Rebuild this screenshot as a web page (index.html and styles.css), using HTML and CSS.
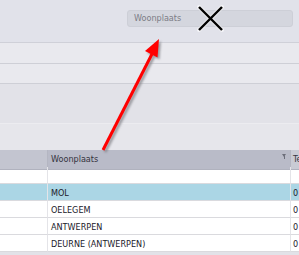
FILE: index.html
```html
<!DOCTYPE html>
<html lang="nl">
<head>
<meta charset="UTF-8">
<title>Woonplaats</title>
<link rel="stylesheet" href="styles.css">
</head>
<body>
<div id="screen">
    <div class="toolbar">
        <div class="search">Woonplaats</div>
    </div>
    <div class="band"></div>
    <div class="band band-low"></div>
    <div class="panel"></div>
    <div class="group-bar"></div>

    <!-- Raster -->
    <div class="grid">
        <div class="head cell"></div>
        <div class="head cell head-active">Woonplaats <span class="filter"></span></div>
        <div class="head cell head-last">Te</div>

        <div class="cell"></div><div class="cell"></div><div class="cell last"></div>

        <div class="cell sel"></div><div class="cell sel">MOL</div><div class="cell sel last">0</div>
        <div class="cell"></div><div class="cell">OELEGEM</div><div class="cell last">0</div>
        <div class="cell"></div><div class="cell">ANTWERPEN</div><div class="cell last">0</div>
        <div class="cell"></div><div class="cell">DEURNE (ANTWERPEN)</div><div class="cell last">0</div>
    </div>

    <!-- annotaties -->
    <svg class="overlay" width="299" height="255" viewBox="0 0 299 255">
        <defs>
            <filter id="shadow" x="-20%" y="-20%" width="140%" height="140%">
                <feGaussianBlur stdDeviation="1.2"/>
            </filter>
        </defs>
        <g fill="#7a7a80" stroke="#7a7a80" opacity="0.7" filter="url(#shadow)" transform="translate(2 2)">
            <line x1="103" y1="150" x2="152" y2="54" stroke-width="3"/>
            <polygon points="159,39 157.5,57.5 145,51" stroke="none"/>
        </g>
        <line x1="103" y1="150" x2="152" y2="54" stroke="#f00" stroke-width="3"/>
        <polygon points="159,39 157.5,57.5 145,51" fill="#f00"/>

        <g stroke="#fff" stroke-width="4" opacity="0.6" stroke-linecap="round">
            <line x1="199" y1="7" x2="222" y2="30"/>
            <line x1="222" y1="7" x2="199" y2="30"/>
        </g>
        <g stroke="#000" stroke-width="2.4">
            <line x1="199" y1="7" x2="222" y2="30"/>
            <line x1="222" y1="7" x2="199" y2="30"/>
        </g>
    </svg>
</div>
</body>
</html>
```
FILE: styles.css
```css
body {
    margin: 0;
    font-family: "DejaVu Sans Condensed", "DejaVu Sans", sans-serif;
    font-size: 9px;
    color: #20202a;
    background-color: #e2e2e8;
}

#screen {
    position: relative;
    width: 299px;
    height: 255px;
    overflow: hidden;
}

.toolbar {
    height: 43px;
    box-sizing: border-box;
    border-bottom: 1px solid #cfd0d8;
    background-color: #e1e2ea;
    display: flex;
    justify-content: flex-end;
    padding: 10px 6px 0 0;
}

.search {
    width: 166px;
    height: 17px;
    box-sizing: border-box;
    border: 1px solid #cdcfd7;
    border-radius: 3px;
    background-color: #d4d6de;
    color: #7c7d86;
    padding-left: 6px;
    line-height: 15px;
}

.band {
    height: 20px;
    border-bottom: 1px solid #cecfd6;
    background-color: #e9e9ee;
}

.band-low {
    height: 19px;
}

.panel {
    height: 39px;
    background-color: #e2e2e8;
}

.group-bar {
    height: 27px;
    background-color: #e6e6eb;
    border-top: 1px solid #ececf0;
    box-sizing: border-box;
}

.grid {
    display: grid;
    grid-template-columns: 48px 243px 1fr;
    grid-auto-rows: 17px;
    background-color: #fff;
}

.cell {
    border-right: 1px solid #e4e4e8;
    border-bottom: 1px solid #dadade;
    padding: 2px 0 0 3px;
    line-height: 15px;
    white-space: nowrap;
    overflow: hidden;
    position: relative;
}

.cell.last {
    border-right: none;
    padding-left: 2px;
}

.head {
    height: 18px;
    background-color: #c3c5d0;
    border-right: 1px solid #b4b6c2;
    border-bottom: 1px solid #b0b2be;
    padding-top: 1px;
    line-height: 17px;
    color: #34343e;
}

.head-active {
    background-color: #b9bbc8;
}

.head-last {
    background-color: #c9cbd4;
    border-right: none;
    padding-left: 2px;
}

.filter {
    position: absolute;
    right: 4px;
    top: 4px;
    width: 0;
    height: 0;
    border-left: 2.5px solid transparent;
    border-right: 2.5px solid transparent;
    border-top: 3px solid #6c6e7a;
}

.filter::after {
    content: "";
    position: absolute;
    left: -0.5px;
    top: -1px;
    width: 1px;
    height: 3px;
    background-color: #6c6e7a;
}

.sel {
    background-color: #abd6e5;
}

.overlay {
    position: absolute;
    left: 0;
    top: 0;
}
```
